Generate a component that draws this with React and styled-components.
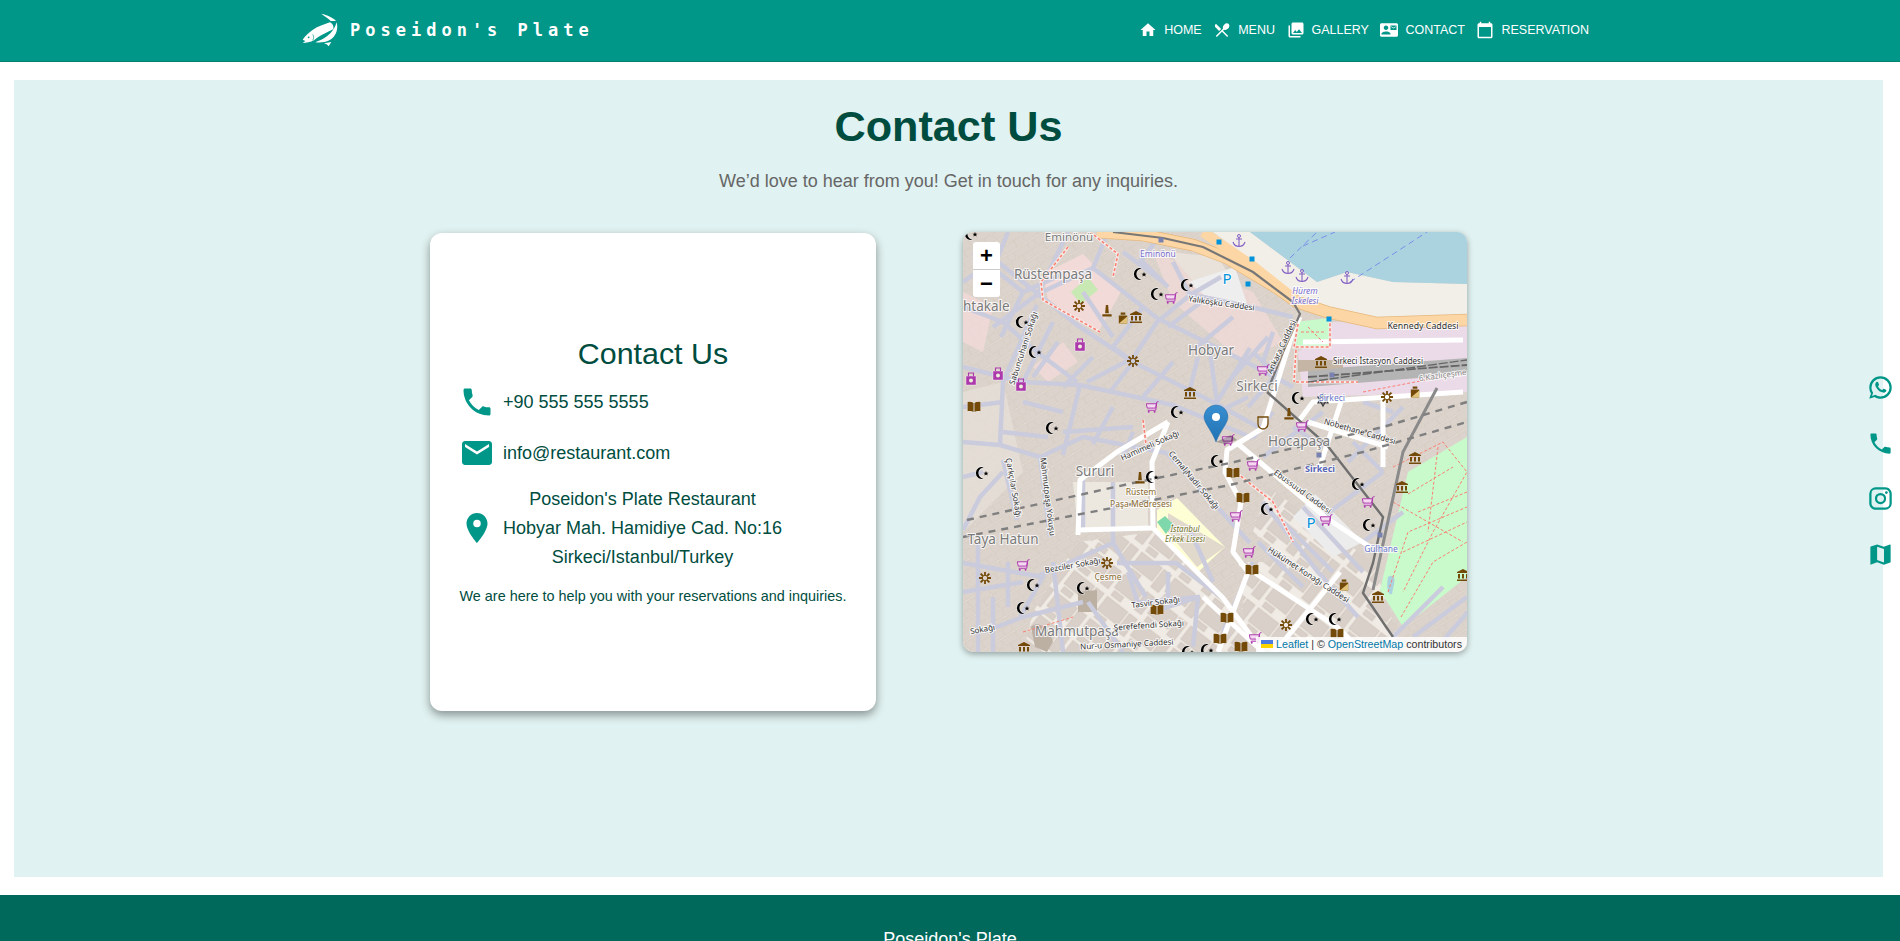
import React from "react";
import styled, { createGlobalStyle } from "styled-components";
import {
  MdHome,
  MdRestaurantMenu,
  MdPhotoLibrary,
  MdContactMail,
  MdCalendarToday,
  MdPhone,
  MdEmail,
  MdLocationOn,
  MdMap,
} from "react-icons/md";

const GlobalStyle = createGlobalStyle`
  html, body {
    margin: 0;
    height: 941px;
    overflow: hidden;
    background: #ffffff;
    font-family: "Liberation Sans", Arial, sans-serif;
  }
`;

const Header = styled.header`
  height: 62px;
  background: #009688;
  border-bottom: 1px solid #00806f;
  box-sizing: border-box;
  display: flex;
  align-items: center;
  justify-content: space-between;
  padding: 0 311px 2px 302px;
`;

const Brand = styled.div`
  display: flex;
  align-items: center;
  gap: 12px;
`;

const BrandName = styled.span`
  color: #ffffff;
  font-family: "DejaVu Sans Mono", monospace;
  font-weight: 700;
  font-size: 17px;
  letter-spacing: 5px;
  white-space: pre;
`;

const Nav = styled.nav`
  display: flex;
  align-items: center;
  gap: 11.5px;
`;

const NavLink = styled.a`
  display: flex;
  align-items: center;
  gap: 7px;
  color: #ffffff;
  font-size: 12.5px;
  text-transform: uppercase;
  svg {
    font-size: 18px;
  }
`;

const Main = styled.main`
  margin: 18px 17px 18px 14px;
  height: 797px;
  background: #e0f2f1;
  display: flex;
  flex-direction: column;
  align-items: center;
`;

const Title = styled.h1`
  margin: 20px 0 0;
  color: #004d40;
  font-size: 43.2px;
  line-height: 52px;
  font-weight: 700;
`;

const Subtitle = styled.p`
  margin: 15px 0 0;
  color: #666666;
  font-size: 18px;
  line-height: 28px;
`;

const Columns = styled.div`
  margin-top: 37px;
  display: flex;
  align-items: flex-start;
  gap: 87px;
`;

const Card = styled.section`
  width: 446px;
  height: 478px;
  box-sizing: border-box;
  background: #ffffff;
  border-radius: 12px;
  box-shadow: 0 4px 10px rgba(0, 0, 0, 0.4);
  padding: 0 24px 2px;
  display: flex;
  flex-direction: column;
  justify-content: center;
  margin-top: 1px;
`;

const CardTitle = styled.h2`
  margin: 0 0 12px;
  text-align: center;
  color: #004d40;
  font-size: 30.4px;
  line-height: 38px;
  font-weight: 400;
`;

const InfoRow = styled.div`
  display: flex;
  align-items: center;
  gap: 8px;
  padding-left: 5px;
  margin-bottom: ${(p) => p.$gap}px;
  color: #004d40;
  font-size: 18px;
  line-height: 28.8px;
  svg {
    flex: none;
    font-size: 36px;
    color: #009688;
  }
`;

const Address = styled.div`
  text-align: center;
`;

const Note = styled.p`
  margin: 13px 0 0;
  text-align: center;
  color: #004d40;
  font-size: 14.4px;
  line-height: 23px;
  white-space: nowrap;
`;

const MapBox = styled.div`
  position: relative;
  width: 504px;
  height: 420px;
  border-radius: 10px;
  overflow: hidden;
  box-shadow: 0 2px 6px rgba(0, 0, 0, 0.35);
  svg {
    display: block;
  }
`;

const Zoom = styled.div`
  position: absolute;
  top: 10px;
  left: 10px;
  width: 27px;
  background: #ffffff;
  border-radius: 3px;
  display: flex;
  flex-direction: column;
`;

const ZoomButton = styled.span`
  height: 27px;
  display: flex;
  align-items: center;
  justify-content: center;
  font-family: "Liberation Sans", sans-serif;
  font-weight: 700;
  font-size: 22px;
  color: #000000;
  & + & {
    border-top: 1px solid #cccccc;
  }
`;

const Attribution = styled.div`
  position: absolute;
  right: 0;
  bottom: 0;
  padding: 0 5px;
  height: 15px;
  line-height: 15px;
  background: rgba(255, 255, 255, 0.85);
  color: #333333;
  font-size: 10.7px;
  white-space: pre;
  svg {
    display: inline-block;
    margin-right: 3px;
  }
`;

const AttrLink = styled.span`
  color: #0078a8;
`;

const SideLinks = styled.aside`
  position: fixed;
  right: 6px;
  top: 374px;
  display: flex;
  flex-direction: column;
  gap: 28.6px;
  svg {
    display: block;
    width: 27px;
    height: 27px;
    fill: #009688;
    color: #009688;
  }
`;

const Footer = styled.footer`
  background: #00695c;
  color: #ffffff;
  text-align: center;
  padding: 33px 0;
  font-size: 18px;
  line-height: 22px;
`;

const Halo = styled.text`
  font-family: "Noto Sans", sans-serif;
  font-size: ${(p) => p.$size || 8}px;
  font-style: ${(p) => (p.$italic ? "italic" : "normal")};
  font-weight: ${(p) => (p.$bold ? 700 : 400)};
  fill: ${(p) => p.$color || "#333333"};
  stroke: rgba(255, 255, 255, 0.8);
  stroke-width: 2px;
  paint-order: stroke;
  text-anchor: ${(p) => p.$anchor || "middle"};
`;

const P_STREETS = [
  "30,26 114,93 170,130 250,170 297,196",
  "227,63 194,90 170,126 124,150",
  "230,63 293,76 330,85",
  "194,86 287,132 330,155",
  "130,36 194,86",
  "74,73 40,150 37,213",
  "0,135 60,150 117,153 210,173 290,206",
  "117,153 100,223",
  "247,120 254,170",
  "287,116 254,170",
  "204,221 257,278 287,311",
  "77,225 87,305",
  "40,228 54,288",
  "154,331 213,331 257,364",
  "73,345 150,311 183,365",
  "170,371 237,365",
  "0,331 80,345 57,385",
  "40,240 17,265 0,298",
  "37,213 77,225 120,205 204,221",
  "0,75 40,90 74,120 114,150",
  "145,0 130,36 75,62 30,95",
  "210,30 227,63 258,45",
  "180,75 150,115 170,130",
  "10,20 60,60 100,42",
  "120,240 120,300",
  "150,311 150,250",
  "228,300 250,350",
  "300,270 355,340 395,385",
  "385,230 440,175",
  "360,285 420,240",
  "300,225 360,180",
  "20,400 60,385 120,370",
  "125,370 160,420",
  "195,378 235,365 230,415",
  "290,330 260,400",
  "0,210 37,213",
  "290,120 320,150",
  "90,90 60,150",
  "400,310 440,280",
  "45,0 35,25 0,50",
  "75,62 105,0",
  "60,60 38,105",
  "95,110 70,145",
  "130,125 100,155",
  "150,105 120,60",
  "200,0 178,28 205,55",
  "160,20 200,50",
  "205,95 245,65",
  "230,118 270,85",
  "265,150 305,105",
  "147,160 170,130",
  "180,165 210,130",
  "225,165 235,125",
  "0,175 40,170",
  "0,245 20,240",
  "60,170 100,180",
  "40,200 85,205",
  "100,200 170,195",
  "150,175 130,212",
  "170,200 160,225",
  "15,310 15,420",
  "0,360 60,350",
  "30,365 30,420",
  "45,330 45,375",
  "90,330 100,420",
  "165,340 175,372",
  "205,340 205,370",
  "310,100 300,130",
  "320,135 285,175",
  "255,180 285,165",
  "310,180 290,206",
  "330,195 360,215",
  "295,310 340,355",
  "320,290 370,340",
  "340,275 400,340",
  "390,210 420,240",
  "430,180 400,170",
  "480,355 430,405",
  "504,365 450,405",
  "505,380 470,420",
];

const WHITE_ROADS = [
  "205,190 154,220 117,248 115,303",
  "115,298 189,296",
  "205,190 189,230 190,296 260,366 300,420",
  "300,196 264,218 262,240 278,270 270,320 285,340 255,420",
  "274,211 362,285 407,315",
  "277,331 374,395 400,420",
  "300,196 330,100 337,85",
  "335,190 350,170 500,160",
  "345,190 425,215",
  "378,170 355,240",
  "420,165 420,235",
  "377,340 312,420",
  "340,110 500,108",
  "240,365 300,420",
];

const FOOT_PATHS = [
  "105,15 78,50 80,68 137,100",
  "127,0 155,22 150,45",
  "335,92 331,115 367,115 367,88",
  "333,150 395,150",
  "333,118 331,150",
  "270,238 310,270 330,310",
  "180,188 183,212",
];

const THIN_PINK = [
  "430,235 480,210 504,240 470,300 440,360",
  "455,280 504,260",
  "440,320 504,290",
  "475,215 465,300",
  "430,270 500,310",
  "60,400 110,385",
  "400,160 504,140",
  "345,95 360,110",
  "338,100 362,100",
  "445,262 490,235",
  "425,360 445,300 504,275",
  "438,385 470,330 504,310",
];

const FERRY_LINES = ["327,26 354,0", "387,50 464,0", "340,14 372,0"];

const CRESCENTS = [
  [177, 42], [194, 62], [224, 53], [59, 90], [72, 120], [89, 196], [214, 180], [335, 166],
  [254, 229], [19, 241], [189, 245], [304, 277], [395, 252], [406, 293], [70, 353],
  [60, 376], [120, 356], [349, 387], [372, 387], [244, 418], [225, 420], [8, 2],
];
const CARTS = [
  [208, 66], [300, 138], [189, 175], [339, 194], [265, 208], [290, 233], [405, 270],
  [363, 288], [273, 284], [286, 320], [60, 333], [292, 406],
];
const BAGS = [[117, 113], [35, 142], [8, 147], [58, 153]];
const MUSEUMS = [[173, 85], [358, 130], [227, 161], [452, 226], [439, 255], [415, 365], [500, 343], [61, 416]];
const BOOKS = [[11, 175], [270, 241], [280, 266], [289, 338], [194, 378], [264, 386], [257, 407], [278, 415], [374, 402]];
const FLOWERS = [[116, 74], [170, 129], [424, 165], [144, 331], [22, 346], [323, 393]];
const MONUMENTS = [[144, 79], [177, 246], [326, 182]];
const GUARDS = [[160, 86], [452, 160], [381, 353]];
const ANCHORS = [[276, 9], [325, 36], [339, 44], [384, 46]];
const STOPS = [[256, 10], [289, 27], [285, 52], [366, 87]];
const BUSES = [[198, 8], [310, 137], [369, 143], [356, 223], [417, 303]];

const LABELS = [
  { x: 106, y: 9, t: "Eminönü", size: 11.5, color: "#7a7a7a" },
  { x: 90, y: 47, t: "Rüstempaşa", size: 13.5, color: "#7a7a7a" },
  { x: 0, y: 79, t: "htakale", size: 13.5, color: "#7a7a7a", anchor: "start" },
  { x: 248, y: 123, t: "Hobyar", size: 13.5, color: "#7a7a7a" },
  { x: 294, y: 159, t: "Sirkeci", size: 13.5, color: "#7a7a7a" },
  { x: 336, y: 214, t: "Hocapaşa", size: 13.5, color: "#7a7a7a" },
  { x: 132, y: 244, t: "Sururi", size: 13.5, color: "#7a7a7a" },
  { x: 40, y: 312, t: "Taya Hatun", size: 13.5, color: "#7a7a7a" },
  { x: 114, y: 404, t: "Mahmutpaşa", size: 13.5, color: "#7a7a7a" },
  { x: 195, y: 25, t: "Eminönü", size: 8.5, color: "#7a6fd0" },
  { x: 342, y: 62, t: "Hürem", size: 8.5, color: "#7a6fd0", italic: true },
  { x: 342, y: 72, t: "İskelesi", size: 8.5, color: "#7a6fd0", italic: true },
  { x: 369, y: 169, t: "Sirkeci", size: 8.5, color: "#6a78cc" },
  { x: 357, y: 240, t: "Sirkeci", size: 9, color: "#5866b8", bold: true },
  { x: 418, y: 320, t: "Gülhane", size: 8.5, color: "#6a78cc" },
  { x: 178, y: 263, t: "Rüstem", size: 8.5, color: "#8a6a30" },
  { x: 178, y: 275, t: "Paşa Medresesi", size: 8.5, color: "#8a6a30" },
  { x: 222, y: 300, t: "İstanbul", size: 8, color: "#74742c", italic: true },
  { x: 222, y: 310, t: "Erkek Lisesi", size: 8, color: "#74742c", italic: true },
  { x: 145, y: 348, t: "Çesme", size: 8.5, color: "#8a6a30" },
  { x: 460, y: 97, t: "Kennedy Caddesi", size: 8.8 },
  { x: 415, y: 132, t: "Sirkeci İstasyon Caddesi", size: 8 },
  { x: 258, y: 74, t: "Yalıköşkü Caddesi", size: 8, rot: 8 },
  { x: 321, y: 116, t: "Ankara Caddesi", size: 8, rot: -65 },
  { x: 63, y: 117, t: "Sabuncuhani Sokağı", size: 8, rot: -72 },
  { x: 396, y: 202, t: "Nöbethane Caddesi", size: 8, rot: 16 },
  { x: 188, y: 216, t: "Hamimeli Sokağı", size: 8, rot: -24 },
  { x: 229, y: 250, t: "Cemal Nadir Sokağı", size: 8, rot: 50 },
  { x: 338, y: 262, t: "Ebussuud Caddesi", size: 8, rot: 36 },
  { x: 48, y: 256, t: "Çarkçılar Sokağı", size: 8, rot: 80 },
  { x: 82, y: 265, t: "Mahmutpaşa Yokuşu", size: 8, rot: 83 },
  { x: 110, y: 336, t: "Bezciler Sokağı", size: 8, rot: -10 },
  { x: 193, y: 373, t: "Tasvir Sokağı", size: 8, rot: -7 },
  { x: 186, y: 396, t: "Şerefefendi Sokağı", size: 8, rot: -4 },
  { x: 164, y: 415, t: "Nur-u Osmaniye Caddesi", size: 8, rot: -3 },
  { x: 344, y: 345, t: "Hükümet Konağı Caddesi", size: 8, rot: 33 },
  { x: 480, y: 146, t: "6 Kazlıçeşme", size: 8, color: "#8a8a8a", rot: -8 },
  { x: 20, y: 400, t: "Sokağı", size: 8, rot: -10 },
];

const Sprites = () => (
  <defs>
    <pattern id="blocks" width="24" height="17" patternUnits="userSpaceOnUse" patternTransform="rotate(-32)">
      <rect width="24" height="17" fill="#efe8e1" />
      <rect x="0.5" y="0.5" width="13" height="7.5" fill="#dcd4cc" stroke="#c9beb5" strokeWidth="0.4" />
      <rect x="14.4" y="0.5" width="9" height="7.5" fill="#dcd4cc" stroke="#c9beb5" strokeWidth="0.4" />
      <rect x="0.5" y="9" width="7" height="7.5" fill="#dcd4cc" stroke="#c9beb5" strokeWidth="0.4" />
      <rect x="8.5" y="9" width="15" height="7.5" fill="#dcd4cc" stroke="#c9beb5" strokeWidth="0.4" />
    </pattern>
    <pattern id="largeBlocks" width="42" height="28" patternUnits="userSpaceOnUse" patternTransform="rotate(38)">
      <rect width="42" height="28" fill="#f0ece5" />
      <rect x="2" y="2" width="26" height="17" fill="#d9d0c9" stroke="#c6bab0" strokeWidth="0.4" />
      <rect x="30" y="2" width="10" height="22" fill="#d9d0c9" stroke="#c6bab0" strokeWidth="0.4" />
      <rect x="4" y="21" width="12" height="6" fill="#d9d0c9" stroke="#c6bab0" strokeWidth="0.4" />
    </pattern>
    <linearGradient id="pin" x1="0" y1="0" x2="0" y2="1">
      <stop offset="0" stopColor="#3a8fd0" />
      <stop offset="1" stopColor="#1f72b4" />
    </linearGradient>
    <symbol id="crescent" viewBox="-8 -8 16 16" overflow="visible">
      <path
        d="M2 -5.6 A6 6 0 1 0 2 5.6 A4.6 4.6 0 1 1 2 -5.6Z"
        fill="#000"
        stroke="#fff"
        strokeWidth="0.8"
        paintOrder="stroke"
      />
      <path d="M4 -2 L4.7 -0.3 L6.5 -0.3 L5.1 0.8 L5.6 2.5 L4 1.5 L2.4 2.5 L2.9 0.8 L1.5 -0.3 L3.3 -0.3Z" fill="#000" />
    </symbol>
    <symbol id="cart" viewBox="-6 -6 12 12" overflow="visible">
      <path d="M6 -5 L4.4 -4.6 L3.5 3 H-4 M-5.2 -3 H4 L3.4 1 H-4.4Z" fill="#f4d9f0" stroke="#ac39ac" strokeWidth="0.9" />
      <circle cx="-3" cy="4.4" r="0.9" fill="#ac39ac" />
      <circle cx="2.4" cy="4.4" r="0.9" fill="#ac39ac" />
    </symbol>
    <symbol id="bag" viewBox="-6 -7 12 14" overflow="visible">
      <path d="M-5 -3 H5 V6 H-5Z" fill="#ac39ac" stroke="#fff" strokeWidth="0.4" />
      <path d="M-2.5 -3 V-6 H2.5 V-3" fill="none" stroke="#ac39ac" strokeWidth="1.1" />
      <circle cx="0" cy="1.5" r="2" fill="#eed" />
    </symbol>
    <symbol id="museum" viewBox="-6.5 -6.5 13 13" overflow="visible">
      <path
        d="M0 -6 L6 -3 V-2 H-6 V-3Z M-5 -1 H-3 V3.5 H-5Z M-1 -1 H1 V3.5 H-1Z M3 -1 H5 V3.5 H3Z M-6 4.5 H6 V6 H-6Z"
        fill="#734a08"
      />
    </symbol>
    <symbol id="book" viewBox="-7 -6 14 12" overflow="visible">
      <path d="M-6 -4.6 C-4 -5.4 -2 -5 -0.4 -3.8 V4.6 C-2 3.6 -4 3.4 -6 4Z M6 -4.6 C4 -5.4 2 -5 0.4 -3.8 V4.6 C2 3.6 4 3.4 6 4Z" fill="#734a08" stroke="#fff" strokeWidth="0.5" paintOrder="stroke" />
    </symbol>
    <symbol id="flower" viewBox="-7 -7 14 14" overflow="visible">
      <path
        d="M0 -6 V-2 M0 6 V2 M-6 0 H-2 M6 0 H2 M-4.4 -4.4 L-1.5 -1.5 M4.4 -4.4 L1.5 -1.5 M-4.4 4.4 L-1.5 1.5 M4.4 4.4 L1.5 1.5"
        stroke="#734a08"
        strokeWidth="1.8"
      />
    </symbol>
    <symbol id="monument" viewBox="-6 -7 12 14" overflow="visible">
      <path d="M-1.2 -6.5 H1.2 L2 2.5 H-2Z M-5 3.5 H5 V6 H-5Z" fill="#734a08" />
    </symbol>
    <symbol id="guard" viewBox="-6 -7 12 14" overflow="visible">
      <path d="M-2.5 -6 H2.5 V-3.6 H-2.5Z M-4.5 -2.6 H4.5 V6 H-4.5Z" fill="#734a08" />
      <path d="M-4.5 6 L4.5 -1.5 V6Z" fill="#e0c27a" />
    </symbol>
    <symbol id="anchor" viewBox="-7 -7 14 14" overflow="visible">
      <path
        d="M0 -3.5 V5.5 M-3 -2 H3 M-6 1 C-5 4.5 -2 5.5 0 5.5 C2 5.5 5 4.5 6 1"
        fill="none"
        stroke="#8461c4"
        strokeWidth="1.1"
      />
      <circle cy="-5" r="1.5" fill="none" stroke="#8461c4" strokeWidth="1" />
    </symbol>
  </defs>
);

const Marks = ({ id, list, size }) =>
  list.map(([x, y]) => (
    <use key={`${id}${x}-${y}`} href={`#${id}`} x={x - size / 2} y={y - size / 2} width={size} height={size} />
  ));

const StreetMap = () => (
  <svg width="504" height="420" viewBox="0 0 504 420">
    <Sprites />
    <g style={{ filter: "blur(0.35px)" }}>
      <rect width="504" height="420" fill="url(#blocks)" />
      {/* land use */}
      <path d="M115 310 L190 300 L262 370 L300 420 L60 420 L70 380Z" fill="url(#largeBlocks)" />
      <path d="M280 330 L410 330 L440 420 L280 420Z" fill="url(#largeBlocks)" />
      <path d="M305 255 L410 330 L350 350 L290 300Z" fill="url(#largeBlocks)" />
      <path d="M80 42 L120 22 L158 60 L135 100 L85 68Z" fill="#f2dad9" />
      <path d="M108 60 L125 45 L135 58 L118 72Z" fill="#c8e8b4" />
      <path d="M190 20 L290 60 L320 110 L280 130 L210 70Z" fill="#f2dad9" opacity="0.7" />
      <path d="M0 60 L30 75 L20 120 L0 110Z" fill="#f2dad9" opacity="0.8" />
      <path d="M70 135 L100 110 L115 130 L85 150Z" fill="#f2dad9" opacity="0.8" />
      <path d="M0 160 L40 150 L60 240 L0 300Z" fill="#e9e3dc" opacity="0.6" />
      <path d="M110 250 L185 250 L185 296 L115 298Z" fill="#ece7df" />
      <path d="M205 20 L255 25 L285 75 L250 72Z" fill="#e9e2db" />
      <path d="M250 0 L287 0 L354 50 L384 40 L430 50 L504 52 L504 90 L400 88 L340 70 L290 30Z" fill="#f2efe9" />
      <path d="M370 90 L504 92 L504 160 L340 165 L335 120Z" fill="#ebdbe8" />
      <path d="M225 50 L272 35 L285 75 L250 70Z" fill="#eeeeee" />
      <path d="M330 285 L352 262 L400 310 L370 325Z" fill="#ececec" />
      {/* water and parks */}
      <path d="M287 0 L354 50 L384 40 L430 50 L504 52 L504 0Z" fill="#aad3df" />
      {FERRY_LINES.map((d) => (
        <polyline key={d} points={d} fill="none" stroke="#7b8fe8" strokeWidth="1" strokeDasharray="6 4" />
      ))}
      <path d="M332 90 L367 86 L367 115 L330 115Z" fill="#c8facc" />
      <path d="M417 358 L445 240 L504 205 L504 345 L440 395Z" fill="#c8facc" />
      <path d="M425 345 C429 342 433 345 431 352 L429 362 C425 364 423 355 425 345Z" fill="#aad3df" />
      <path d="M194 278 L214 266 L262 315 L234 341 L194 298Z" fill="#ffffd6" />
      <path d="M205 281 L262 315 L234 335 L205 300Z" fill="#d9d0c9" opacity="0.8" />
      <path d="M194 290 L202 284 L210 292 L203 302Z" fill="#7fd8ab" />
      <path d="M345 138 L504 126 L504 142 L345 155Z" fill="#b4b4b4" />
      <path d="M335 128 L380 128 L380 136 L335 140Z" fill="#c4b5a5" />
      <path d="M115 360 L134 358 L134 380 L115 380Z" fill="#bcb0a3" />
      <path d="M68 395 C75 388 85 395 90 410 L84 420 L72 415Z" fill="#bcb0a3" />
      {/* streets */}
      {P_STREETS.map((d) => (
        <polyline key={d} points={d} fill="none" stroke="#cacbdc" strokeWidth="4.5" strokeLinejoin="round" />
      ))}
      {WHITE_ROADS.map((d) => (
        <polyline key={d} points={d} fill="none" stroke="#ffffff" strokeWidth="5" strokeLinejoin="round" />
      ))}
      <polyline
        points="134,0 180,3 230,13 264,26 314,56 334,70 364,80 414,91 504,88"
        fill="none"
        stroke="#e6b87c"
        strokeWidth="12.5"
      />
      <polyline
        points="134,0 180,3 230,13 264,26 314,56 334,70 364,80 414,91 504,88"
        fill="none"
        stroke="#fcd6a4"
        strokeWidth="11"
      />
      <polyline points="240,0 290,34 330,66" fill="none" stroke="#fcd6a4" strokeWidth="10" />
      {FOOT_PATHS.map((d) => (
        <g key={d}>
          <polyline points={d} fill="none" stroke="#f5ecea" strokeWidth="3" />
          <polyline points={d} fill="none" stroke="#fa8072" strokeWidth="1.6" strokeDasharray="3 2" />
        </g>
      ))}
      {THIN_PINK.map((d) => (
        <polyline key={d} points={d} fill="none" stroke="#fa8072" strokeWidth="1" strokeDasharray="3 2" />
      ))}
      {/* railways */}
      <polyline points="150,0 200,6 240,15 290,40 330,70 337,82 320,120 304,160" fill="none" stroke="#777777" strokeWidth="2.2" />
      <polyline points="304,160 364,213 420,285 410,331 400,361 430,405" fill="none" stroke="#6f6f6f" strokeWidth="2.4" />
      <polyline points="474,156 440,220 410,358" fill="none" stroke="#8a8a8a" strokeWidth="3" />
      <polyline points="4,288 170,251 267,231 420,195 504,170" fill="none" stroke="#7f7f7f" strokeWidth="2.4" strokeDasharray="7 6" />
      <polyline points="0,305 267,253 400,220 504,190" fill="none" stroke="#7f7f7f" strokeWidth="2.4" strokeDasharray="7 6" />
      <polyline points="345,145 504,133" fill="none" stroke="#666666" strokeWidth="1.8" strokeDasharray="9 2" />
      <polyline points="345,150 504,128" fill="none" stroke="#666666" strokeWidth="1.4" strokeDasharray="9 2" />
    </g>
    {STOPS.map(([x, y]) => (
      <rect key={`s${x}`} x={x - 2.5} y={y - 2.5} width="5" height="5" fill="#0092da" />
    ))}
    {BUSES.map(([x, y]) => (
      <rect key={`b${x}`} x={x - 2.5} y={y - 2.5} width="5" height="5" fill="#7981b0" />
    ))}
    <Marks id="crescent" list={CRESCENTS} size={16} />
    <Marks id="cart" list={CARTS} size={13} />
    <Marks id="bag" list={BAGS} size={14} />
    <Marks id="museum" list={MUSEUMS} size={13} />
    <Marks id="book" list={BOOKS} size={15} />
    <Marks id="flower" list={FLOWERS} size={14} />
    <Marks id="monument" list={MONUMENTS} size={13} />
    <Marks id="guard" list={GUARDS} size={13} />
    <Marks id="anchor" list={ANCHORS} size={14} />
    {/* theatre and synagogue marks */}
    <path d="M295 185 H305 V192 C305 196 301 197 300 197 C299 197 295 196 295 192Z" fill="none" stroke="#734a08" strokeWidth="1.3" />
    <path d="M360 162 L365 171 H355Z M360 174 L355 165 H365Z" fill="none" stroke="#333333" strokeWidth="1.2" />
    <Halo x={264} y={52} $size={15} $color="#0092da">P</Halo>
    <Halo x={348} y={296} $size={15} $color="#0092da">P</Halo>
    {LABELS.map((l) => (
      <Halo
        key={l.t + l.x}
        x={l.x}
        y={l.y}
        $size={l.size}
        $color={l.color}
        $italic={l.italic}
        $bold={l.bold}
        $anchor={l.anchor}
        transform={l.rot ? `rotate(${l.rot} ${l.x} ${l.y})` : undefined}
      >
        {l.t}
      </Halo>
    ))}
    {/* leaflet marker */}
    <path d="M253 210 L268 203 L274 208 L262 212Z" fill="rgba(0,0,0,0.25)" />
    <path
      d="M253 210 C249 199 241 191 241 185 A12 12 0 0 1 265 185 C265 191 257 199 253 210Z"
      fill="url(#pin)"
      stroke="#2a6fa8"
      strokeWidth="0.5"
    />
    <circle cx="253" cy="185" r="4" fill="#ffffff" />
  </svg>
);

const FishLogo = () => (
  <svg width="36" height="34" viewBox="66 40 108 102" fill="#ffffff">
    <path d="M124 42 C142 46 160 54 168 64 L152 64 C146 56 134 50 124 42Z" />
    <path d="M68 120 C80 104 98 88 118 80 C130 75 142 70 150 68 C158 72 162 80 160 88 C144 98 122 104 102 122 C92 128 78 130 68 130 L76 124Z" />
    <path d="M170 68 C176 90 166 112 148 122 C136 128 122 130 106 128 C128 120 160 104 170 68Z" />
    <path d="M132 131 L154 127 L146 140 L140 134Z" />
    <circle cx="86" cy="113" r="2.6" fill="#009688" />
    <path d="M98 104 C102 110 102 116 98 122" fill="none" stroke="#009688" strokeWidth="2" />
  </svg>
);

const WhatsAppIcon = () => (
  <svg viewBox="0 0 24 24">
    <path d="M16.75 13.96c.25.13.41.2.46.3.06.11.04.61-.21 1.18-.2.56-1.24 1.1-1.7 1.12-.46.02-.47.36-2.96-.73-2.49-1.09-3.99-3.75-4.11-3.92-.12-.17-.96-1.38-.92-2.61.05-1.22.69-1.8.95-2.04.24-.26.51-.29.68-.26h.47c.15 0 .36-.06.55.45l.69 1.87c.06.13.1.28.01.44l-.27.41-.39.42c-.12.12-.26.25-.12.5.12.26.62 1.09 1.32 1.78.91.88 1.71 1.17 1.95 1.3.24.14.39.12.54-.04l.81-.94c.19-.25.35-.19.58-.11l1.67.88M12 2a10 10 0 0 1 10 10 10 10 0 0 1-10 10c-1.97 0-3.8-.57-5.35-1.55L2 22l1.55-4.65A9.969 9.969 0 0 1 2 12 10 10 0 0 1 12 2m0 2a8 8 0 0 0-8 8c0 1.72.54 3.31 1.46 4.61L4.5 19.5l2.89-.96A7.95 7.95 0 0 0 12 20a8 8 0 0 0 8-8 8 8 0 0 0-8-8z" />
  </svg>
);

const InstagramIcon = () => (
  <svg viewBox="0 0 24 24">
    <path d="M7.8 2h8.4C19.4 2 22 4.6 22 7.8v8.4a5.8 5.8 0 0 1-5.8 5.8H7.8C4.6 22 2 19.4 2 16.2V7.8A5.8 5.8 0 0 1 7.8 2m-.2 2A3.6 3.6 0 0 0 4 7.6v8.8C4 18.39 5.61 20 7.6 20h8.8a3.6 3.6 0 0 0 3.6-3.6V7.6C20 5.61 18.39 4 16.4 4H7.6m9.65 1.5a1.25 1.25 0 0 1 1.25 1.25A1.25 1.25 0 0 1 17.25 8 1.25 1.25 0 0 1 16 6.75a1.25 1.25 0 0 1 1.25-1.25M12 7a5 5 0 0 1 5 5 5 5 0 0 1-5 5 5 5 0 0 1-5-5 5 5 0 0 1 5-5m0 2a3 3 0 0 0-3 3 3 3 0 0 0 3 3 3 3 0 0 0 3-3 3 3 0 0 0-3-3z" />
  </svg>
);

const links = [
  { label: "Home", Icon: MdHome },
  { label: "Menu", Icon: MdRestaurantMenu },
  { label: "Gallery", Icon: MdPhotoLibrary },
  { label: "Contact", Icon: MdContactMail },
  { label: "Reservation", Icon: MdCalendarToday },
];

const App = () => (
  <>
    <GlobalStyle />
    <Header>
      <Brand>
        <FishLogo />
        <BrandName>Poseidon's Plate</BrandName>
      </Brand>
      <Nav>
        {links.map(({ label, Icon }) => (
          <NavLink key={label}>
            <Icon />
            {label}
          </NavLink>
        ))}
      </Nav>
    </Header>
    <Main>
      <Title>Contact Us</Title>
      <Subtitle>We’d love to hear from you! Get in touch for any inquiries.</Subtitle>
      <Columns>
        <Card>
          <CardTitle>Contact Us</CardTitle>
          <InfoRow $gap={15}>
            <MdPhone />
            <span>+90 555 555 5555</span>
          </InfoRow>
          <InfoRow $gap={14}>
            <MdEmail />
            <span>info@restaurant.com</span>
          </InfoRow>
          <InfoRow $gap={0}>
            <MdLocationOn />
            <Address>
              Poseidon's Plate Restaurant
              <br />
              Hobyar Mah. Hamidiye Cad. No:16
              <br />
              Sirkeci/Istanbul/Turkey
            </Address>
          </InfoRow>
          <Note>We are here to help you with your reservations and inquiries.</Note>
        </Card>
        <MapBox>
          <StreetMap />
          <Zoom>
            <ZoomButton>+</ZoomButton>
            <ZoomButton>−</ZoomButton>
          </Zoom>
          <Attribution>
            <svg width="12" height="8" viewBox="0 0 12 8">
              <rect width="12" height="4" fill="#4c7be1" />
              <rect y="4" width="12" height="4" fill="#ffd500" />
            </svg>
            <AttrLink>Leaflet</AttrLink> | © <AttrLink>OpenStreetMap</AttrLink> contributors
          </Attribution>
        </MapBox>
      </Columns>
    </Main>
    <SideLinks>
      <WhatsAppIcon />
      <MdPhone />
      <InstagramIcon />
      <MdMap />
    </SideLinks>
    <Footer>Poseidon's Plate</Footer>
  </>
);

export default App;
